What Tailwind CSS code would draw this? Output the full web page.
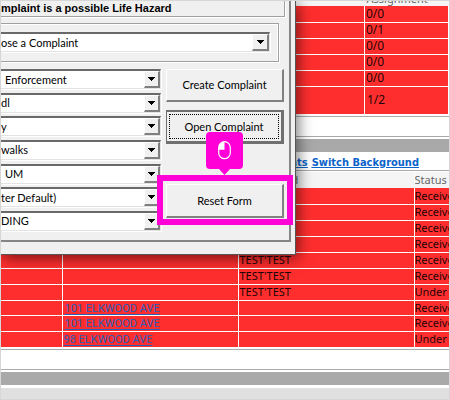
<!DOCTYPE html>
<html lang="en">
<head>
<meta charset="utf-8">
<title>Complaints</title>
<script src="https://cdn.jsdelivr.net/npm/@tailwindcss/browser@4"></script>
</head>
<body class="bg-white">
<div class="relative h-screen overflow-hidden border border-[#d6d6d6] bg-white font-['Noto_Sans',sans-serif] text-[11px] leading-[14px] text-[#1c0505]">

  <main class="flex h-full flex-col">
    <section class="border-b border-[#a9a9a9] pb-[2px]">
      <table class="w-full table-fixed border-collapse">
        <colgroup><col><col class="w-[84px]"></colgroup>
        <thead>
          <tr class="bg-[#f5f5f5] text-left text-[#666]">
            <th class="h-[5px] p-0"></th>
            <th class="h-[5px] p-0 font-normal"><div class="flex h-[5px] items-end overflow-hidden pl-0.5"><span>Assignment</span></div></th>
          </tr>
        </thead>
        <tbody class="bg-[#ff2e2e] text-[12px]">
          <tr class="h-4 border-b border-white"><td class="p-0"></td><td class="border-x border-white p-0 pl-px">0/0</td></tr>
          <tr class="h-4 border-b border-white"><td class="p-0"></td><td class="border-x border-white p-0 pl-px">0/1</td></tr>
          <tr class="h-4 border-b border-white"><td class="p-0"></td><td class="border-x border-white p-0 pl-px">0/0</td></tr>
          <tr class="h-4 border-b border-white"><td class="p-0"></td><td class="border-x border-white p-0 pl-px">0/0</td></tr>
          <tr class="h-4 border-b border-white"><td class="p-0"></td><td class="border-x border-white p-0 pl-px">0/0</td></tr>
          <tr class="h-7"><td class="p-0"></td><td class="border-x border-white p-0 pl-0.5">1/2</td></tr>
        </tbody>
      </table>
    </section>

    <div class="h-5 border-b border-[#a9a9a9]"></div>
    <div class="mt-0.5 h-[13px] bg-[#a9a9a9]"></div>

    <nav class="flex h-[19px] items-center justify-end gap-1 border-b border-[#a9a9a9] pt-1 pr-[30px] font-['DejaVu_Sans_Condensed',sans-serif] text-[11px] font-bold text-[#0a63c9] underline">
      <a href="#">Comments</a>
      <a href="#">Switch Background</a>
    </nav>

    <section class="border-b border-[#a9a9a9] pt-px pb-[2px]">
      <table class="w-full table-fixed border-collapse">
        <colgroup><col class="w-[61px]"><col class="w-[176px]"><col class="w-[176px]"><col></colgroup>
        <thead>
          <tr class="h-4 bg-[#f5f5f5] text-left text-[#666]">
            <th class="p-0"></th><th class="border-l border-white p-0"></th>
            <th class="border-l border-white p-0 pl-[53px] font-normal">d</th>
            <th class="border-l border-white p-0 font-normal">Status</th>
          </tr>
        </thead>
        <tbody class="bg-[#ff2e2e] whitespace-nowrap">
          <tr class="h-4 border-b border-white"><td class="p-0"></td><td class="border-l border-white p-0"></td><td class="border-l border-white p-0"></td><td class="border-l border-white p-0">Received</td></tr>
          <tr class="h-4 border-b border-white"><td class="p-0"></td><td class="border-l border-white p-0"></td><td class="border-l border-white p-0"></td><td class="border-l border-white p-0">Received</td></tr>
          <tr class="h-4 border-b border-white"><td class="p-0"></td><td class="border-l border-white p-0"></td><td class="border-l border-white p-0"></td><td class="border-l border-white p-0">Received</td></tr>
          <tr class="h-4 border-b border-white"><td class="p-0"></td><td class="border-l border-white p-0"></td><td class="border-l border-white p-0"></td><td class="border-l border-white p-0">Received</td></tr>
          <tr class="h-4 border-b border-white"><td class="p-0"></td><td class="border-l border-white p-0"></td><td class="border-l border-white p-0 pl-px">TEST'TEST</td><td class="border-l border-white p-0">Received</td></tr>
          <tr class="h-4 border-b border-white"><td class="p-0"></td><td class="border-l border-white p-0"></td><td class="border-l border-white p-0 pl-px">TEST'TEST</td><td class="border-l border-white p-0">Received</td></tr>
          <tr class="h-4 border-b border-white"><td class="p-0"></td><td class="border-l border-white p-0"></td><td class="border-l border-white p-0 pl-px">TEST'TEST</td><td class="border-l border-white p-0">Under Review</td></tr>
          <tr class="h-[15px] border-b border-white leading-[13px]"><td class="p-0"></td><td class="border-l border-white p-0 pl-0.5"><a href="#" class="font-['Roboto',sans-serif] text-[#2a5cb8] underline underline-offset-2">101 ELKWOOD AVE</a></td><td class="border-l border-white p-0"></td><td class="border-l border-white p-0">Received</td></tr>
          <tr class="h-4 border-b border-white"><td class="p-0"></td><td class="border-l border-white p-0 pl-0.5"><a href="#" class="font-['Roboto',sans-serif] text-[#2a5cb8] underline underline-offset-2">101 ELKWOOD AVE</a></td><td class="border-l border-white p-0"></td><td class="border-l border-white p-0">Received</td></tr>
          <tr class="h-[15px]"><td class="p-0"></td><td class="border-l border-white p-0 pl-px"><a href="#" class="font-['Roboto',sans-serif] text-[#2a5cb8] underline underline-offset-2">98 ELKWOOD AVE</a></td><td class="border-l border-white p-0"></td><td class="border-l border-white p-0">Under Review</td></tr>
        </tbody>
      </table>
    </section>

    <div class="h-5 border-b border-[#a9a9a9]"></div>
    <div class="mt-0.5 h-[13px] bg-[#a9a9a9]"></div>
    <footer class="mt-[3px] flex-1 bg-[#e0e0e0]"></footer>
  </main>

  <div role="dialog" aria-label="Complaint form" class="absolute top-0 left-0 w-[295px] border-r border-b border-[#555] bg-[#f0f0f0] pr-1 pb-3 font-['Lato',sans-serif] text-[11px] leading-[14px] text-black shadow-[2px_3px_14px_rgba(0,0,0,0.55)]">
    <div class="border-r-2 border-b-2 border-[#858585] pr-1 pb-[9px]">
      <h1 class="h-4 overflow-hidden border-r border-b border-[#a0a0a0] font-['Liberation_Sans',sans-serif] text-[11px] font-bold shadow-[1px_1px_0_#fff]">mplaint is a possible Life Hazard</h1>

      <div class="mt-[6px] mr-[6px] border-y border-r border-[#a0a0a0] pt-2 pr-2 pb-[9px] shadow-[1px_1px_0_#fff,inset_-1px_1px_0_#fff]">
        <div class="relative border-t-2 border-r border-b border-t-[#696969] border-r-[#e3e3e3] border-b-[#e3e3e3] bg-white shadow-[1px_1px_0_#fff]">
          <select aria-label="Complaint" class="block h-[17px] w-full appearance-none bg-white outline-none"><option>ose a Complaint</option></select>
          <span class="pointer-events-none absolute top-0 right-0 flex h-[17px] w-[17px] items-center justify-center border-t border-l border-r-2 border-b-2 border-t-white border-l-white border-r-[#808080] border-b-[#808080] bg-[#f0f0f0]"><svg class="h-1 w-[7px]" viewBox="0 0 7 4" shape-rendering="crispEdges"><path d="M0 0h7v1H6v1H5v1H4v1H3V3H2V2H1V1H0z"/></svg></span>
        </div>
      </div>

      <div class="mt-[7px] flex gap-[5px] pr-px">
        <div class="flex flex-1 flex-col justify-between">
          <div class="relative border-t-2 border-r border-b border-t-[#696969] border-r-[#e3e3e3] border-b-[#e3e3e3] shadow-[1px_1px_0_#fff]">
            <select aria-label="Department" class="block h-[17px] w-full appearance-none bg-white pl-1 outline-none"><option>Enforcement</option></select>
            <span class="pointer-events-none absolute top-0 right-0 flex h-[17px] w-4 items-center justify-center border-t border-l border-r-2 border-b-2 border-t-white border-l-white border-r-[#808080] border-b-[#808080] bg-[#f0f0f0]"><svg class="h-1 w-[7px]" viewBox="0 0 7 4" shape-rendering="crispEdges"><path d="M0 0h7v1H6v1H5v1H4v1H3V3H2V2H1V1H0z"/></svg></span>
          </div>
          <div class="relative border-t-2 border-r border-b border-t-[#696969] border-r-[#e3e3e3] border-b-[#e3e3e3] shadow-[1px_1px_0_#fff]">
            <select aria-label="Officer" class="block h-[17px] w-full appearance-none bg-white outline-none"><option>dl</option></select>
            <span class="pointer-events-none absolute top-0 right-0 flex h-[17px] w-4 items-center justify-center border-t border-l border-r-2 border-b-2 border-t-white border-l-white border-r-[#808080] border-b-[#808080] bg-[#f0f0f0]"><svg class="h-1 w-[7px]" viewBox="0 0 7 4" shape-rendering="crispEdges"><path d="M0 0h7v1H6v1H5v1H4v1H3V3H2V2H1V1H0z"/></svg></span>
          </div>
          <div class="relative border-t-2 border-r border-b border-t-[#696969] border-r-[#e3e3e3] border-b-[#e3e3e3] shadow-[1px_1px_0_#fff]">
            <select aria-label="Category" class="block h-[17px] w-full appearance-none bg-white outline-none"><option>y</option></select>
            <span class="pointer-events-none absolute top-0 right-0 flex h-[17px] w-4 items-center justify-center border-t border-l border-r-2 border-b-2 border-t-white border-l-white border-r-[#808080] border-b-[#808080] bg-[#f0f0f0]"><svg class="h-1 w-[7px]" viewBox="0 0 7 4" shape-rendering="crispEdges"><path d="M0 0h7v1H6v1H5v1H4v1H3V3H2V2H1V1H0z"/></svg></span>
          </div>
          <div class="relative border-t-2 border-r border-b border-t-[#696969] border-r-[#e3e3e3] border-b-[#e3e3e3] shadow-[1px_1px_0_#fff]">
            <select aria-label="Type" class="block h-[17px] w-full appearance-none bg-white outline-none"><option>walks</option></select>
            <span class="pointer-events-none absolute top-0 right-0 flex h-[17px] w-4 items-center justify-center border-t border-l border-r-2 border-b-2 border-t-white border-l-white border-r-[#808080] border-b-[#808080] bg-[#f0f0f0]"><svg class="h-1 w-[7px]" viewBox="0 0 7 4" shape-rendering="crispEdges"><path d="M0 0h7v1H6v1H5v1H4v1H3V3H2V2H1V1H0z"/></svg></span>
          </div>
          <div class="relative border-t-2 border-r border-b border-t-[#696969] border-r-[#e3e3e3] border-b-[#e3e3e3] shadow-[1px_1px_0_#fff]">
            <select aria-label="Priority" class="block h-[17px] w-full appearance-none bg-white pl-1 outline-none"><option>UM</option></select>
            <span class="pointer-events-none absolute top-0 right-0 flex h-[17px] w-4 items-center justify-center border-t border-l border-r-2 border-b-2 border-t-white border-l-white border-r-[#808080] border-b-[#808080] bg-[#f0f0f0]"><svg class="h-1 w-[7px]" viewBox="0 0 7 4" shape-rendering="crispEdges"><path d="M0 0h7v1H6v1H5v1H4v1H3V3H2V2H1V1H0z"/></svg></span>
          </div>
          <div class="relative border-t-2 border-r border-b border-t-[#696969] border-r-[#e3e3e3] border-b-[#e3e3e3] shadow-[1px_1px_0_#fff]">
            <select aria-label="Letter" class="block h-[17px] w-full appearance-none bg-white outline-none"><option>ter Default)</option></select>
            <span class="pointer-events-none absolute top-0 right-0 flex h-[17px] w-4 items-center justify-center border-t border-l border-r-2 border-b-2 border-t-white border-l-white border-r-[#808080] border-b-[#808080] bg-[#f0f0f0]"><svg class="h-1 w-[7px]" viewBox="0 0 7 4" shape-rendering="crispEdges"><path d="M0 0h7v1H6v1H5v1H4v1H3V3H2V2H1V1H0z"/></svg></span>
          </div>
          <div class="relative border-t-2 border-r border-b border-t-[#696969] border-r-[#e3e3e3] border-b-[#e3e3e3] shadow-[1px_1px_0_#fff]">
            <select aria-label="Status" class="block h-[17px] w-full appearance-none bg-white outline-none"><option>DING</option></select>
            <span class="pointer-events-none absolute top-0 right-0 flex h-[17px] w-4 items-center justify-center border-t border-l border-r-2 border-b-2 border-t-white border-l-white border-r-[#808080] border-b-[#808080] bg-[#f0f0f0]"><svg class="h-1 w-[7px]" viewBox="0 0 7 4" shape-rendering="crispEdges"><path d="M0 0h7v1H6v1H5v1H4v1H3V3H2V2H1V1H0z"/></svg></span>
          </div>
        </div>

        <div class="flex w-[118px] flex-col pb-[13px]">
          <button class="h-[33px] border-t border-l border-r-2 border-b-2 border-t-white border-l-white border-r-[#808080] border-b-[#808080] bg-[#f0f0f0]">Create Complaint</button>
          <button class="mt-2 h-[34px] border-t-2 border-l border-r-3 border-b-3 border-[#707070] bg-[#f0f0f0] p-0.5"><span class="flex h-full items-center justify-center border border-dotted border-black">Open Complaint</span></button>
          <div class="relative mt-10">
            <button class="block h-[34px] w-full border-t border-l border-r-2 border-b-2 border-t-white border-l-white border-r-[#808080] border-b-[#808080] bg-[#f0f0f0]">Reset Form</button>
            <div class="pointer-events-none absolute -inset-x-[9px] -top-[9px] -bottom-[7px] border-6 border-[#ff00d6]">
              <svg class="absolute -top-[49px] left-[43px] h-11 w-[37px]" viewBox="0 0 37 44">
                <path d="M4 0h29a4 4 0 0 1 4 4v29a4 4 0 0 1-4 4h-9l-5.500 6L13 37H4a4 4 0 0 1-4-4V4a4 4 0 0 1 4-4z" fill="#ff00d6"/>
                <rect x="12.700" y="9.700" width="11.600" height="17" rx="5.800" fill="none" stroke="#fff" stroke-width="1.200"/>
                <path d="M18.500 9.700v8h-5.800v-2.200a5.800 5.800 0 0 1 5.800-5.800z" fill="#fff"/>
              </svg>
            </div>
          </div>
        </div>
      </div>
    </div>
  </div>
</div>
</body>
</html>
